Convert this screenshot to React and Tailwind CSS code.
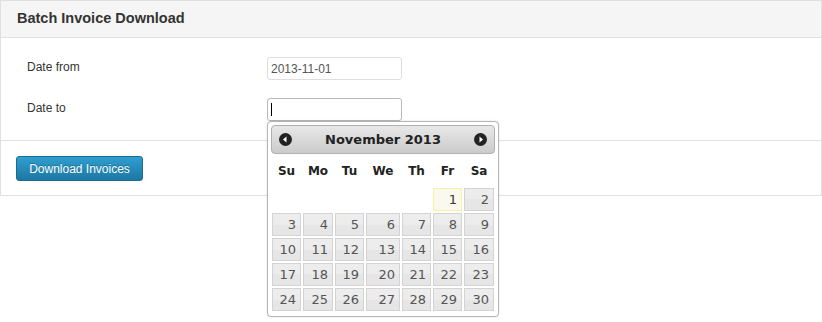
import React from "react";

const weeks = [
  [null, null, null, null, null, 1, 2],
  [3, 4, 5, 6, 7, 8, 9],
  [10, 11, 12, 13, 14, 15, 16],
  [17, 18, 19, 20, 21, 22, 23],
  [24, 25, 26, 27, 28, 29, 30],
];
const dayNames = ["Su", "Mo", "Tu", "We", "Th", "Fr", "Sa"];

function NavIcon({ dir }) {
  return (
    <svg width="13" height="13" viewBox="0 0 13 13">
      <circle cx="6.5" cy="6.5" r="6.5" fill="#222" />
      {dir === "prev" ? (
        <path d="M4 6.5 L7.5 3.5 L7.5 9.5 Z" fill="#fff" />
      ) : (
        <path d="M9 6.5 L5.5 3.5 L5.5 9.5 Z" fill="#fff" />
      )}
    </svg>
  );
}

function DatePicker() {
  return (
    <div className="absolute left-0 top-[23px] w-[232px] h-[196px] bg-white border border-[#b5b5b5] rounded-[4px] p-[3px] shadow-[0_0_2px_rgba(0,0,0,0.15)] font-['DejaVu_Sans',Verdana,sans-serif] z-10">
      <div className="h-[29px] flex items-center justify-between px-[7px] border border-[#b0b0b0] rounded-[4px] bg-[linear-gradient(#e8e8e8,#cbcbcb)]">
        <NavIcon dir="prev" />
        <span className="text-[13px] font-bold text-[#222] leading-none">November 2013</span>
        <NavIcon dir="next" />
      </div>
      <div className="grid grid-cols-[31px_32px_31px_36px_31px_31px_32px]">
        {dayNames.map((d) => (
          <div key={d} className="h-[33px] flex items-center justify-center text-[12px] font-bold text-[#222]">
            {d}
          </div>
        ))}
        {weeks.flat().map((n, i) => (
          <div key={i} className="h-[25px] p-[1px]">
            {n === null ? null : n === 1 ? (
              <div className="h-full border border-[#fcefa1] bg-[#fbf9ee] text-[#363636] text-[13px] flex items-center justify-end pr-[4px]">
                {n}
              </div>
            ) : (
              <div className="h-full border border-[#d3d3d3] bg-[linear-gradient(#ededed,#ececec_50%,#e6e6e6_50%,#e6e6e6)] text-[#555] text-[13px] flex items-center justify-end pr-[4px]">
                {n}
              </div>
            )}
          </div>
        ))}
      </div>
    </div>
  );
}

export default function App() {
  return (
    <div className="w-[822px] h-[322px] bg-white font-['Liberation_Sans',Arial,sans-serif] text-[#333]">
      <div className="border border-[#e0e0e0]">
        <div className="h-[37px] flex items-center pl-[16px] bg-[#f5f5f5] border-b border-[#e0e0e0]">
          <h1 className="text-[14.5px] font-bold text-[#333]">Batch Invoice Download</h1>
        </div>
        <div className="pt-[19px] pb-[19px] pl-[26px] flex flex-col gap-[18px] border-b border-[#e0e0e0]">
          <div className="flex items-start h-[23px]">
            <label className="w-[240px] text-[12px] leading-[18px] pt-[1px]">Date from</label>
            <div className="w-[135px] h-[23px] border border-[#ddd] rounded-[3px] px-[3px] flex items-center text-[12px] text-[#555]">
              2013-11-01
            </div>
          </div>
          <div className="flex items-start h-[23px]">
            <label className="w-[240px] text-[12px] leading-[18px] pt-[1px]">Date to</label>
            <div className="relative">
              <div className="w-[135px] h-[23px] border border-[#b8b8b8] rounded-[3px] px-[3px] flex items-center">
                <span className="block w-[1px] h-[13px] bg-black" />
              </div>
              <DatePicker />
            </div>
          </div>
        </div>
        <div className="pt-[15px] pb-[14px] pl-[15px]">
          <button className="w-[127px] h-[25px] rounded-[3px] border border-[#1b6b92] bg-[linear-gradient(#2f9fd1,#1d77a2)] text-white text-[12px] [text-shadow:0_-1px_0_rgba(0,0,0,0.25)] flex items-center justify-center">
            Download Invoices
          </button>
        </div>
      </div>
    </div>
  );
}
